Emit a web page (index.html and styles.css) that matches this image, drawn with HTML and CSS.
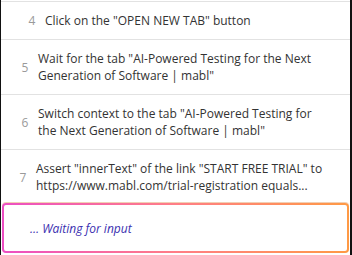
FILE: index.html
```html
<!DOCTYPE html>
<html>
<head>
<meta charset="utf-8">
<link rel="stylesheet" href="styles.css">
</head>
<body>
<div class="panel">
  <ul class="steps">
    <li class="step step-short"><span class="num">4</span><span class="text">Click on the "OPEN NEW TAB" button</span></li>
    <li class="step"><span class="num">5</span><span class="text">Wait for the tab "AI-Powered Testing for the Next Generation of Software | mabl"</span></li>
    <li class="step"><span class="num">6</span><span class="text">Switch context to the tab "AI-Powered Testing for the Next Generation of Software | mabl"</span></li>
    <li class="step step-last"><span class="num">7</span><span class="text">Assert "innerText" of the link "START FREE TRIAL" to https://www.mabl.com/trial-registration equals...</span></li>
  </ul>
  <div class="waiting">… Waiting for input</div>
</div>
</body>
</html>
```
FILE: styles.css
```css
html, body {
  margin: 0;
  padding: 0;
  background: #fff;
}
body {
  width: 352px;
  height: 255px;
  overflow: hidden;
  font-family: "Open Sans", "Liberation Sans", sans-serif;
  font-size: 12px;
  color: #333;
}
.panel {
  box-sizing: border-box;
  height: 255px;
  border-left: 1px solid #111;
  border-right: 2px solid #111;
  padding-top: 1px;
  display: flex;
  flex-direction: column;
}
.steps {
  list-style: none;
  margin: 0;
  padding: 0;
}
.step {
  display: flex;
  align-items: center;
  gap: 8px;
  border-top: 1px solid #e2e2e2;
  padding: 10px 22px 10px 19px;
  line-height: 17px;
}
.step-short {
  padding-left: 26px;
}
.step-last {
  padding-left: 17px;
  padding-bottom: 9px;
}
.num {
  color: #9a9a9a;
  flex: none;
  width: 10px;
  text-align: center;
}
.text {
  flex: 1;
}
.waiting {
  margin: 0 1px;
  height: 46px;
  border: 2px solid transparent;
  border-radius: 4px;
  background:
    linear-gradient(#fff, #fff) padding-box,
    linear-gradient(to right, #ec4fc3, #ff7e86 50%, #ff9a45) border-box;
  box-shadow: 0 -1px 0 rgba(230, 170, 120, 0.55);
  display: flex;
  align-items: center;
  padding-left: 26px;
  font-style: italic;
  color: #3a2fb0;
  font-size: 12px;
}
```
